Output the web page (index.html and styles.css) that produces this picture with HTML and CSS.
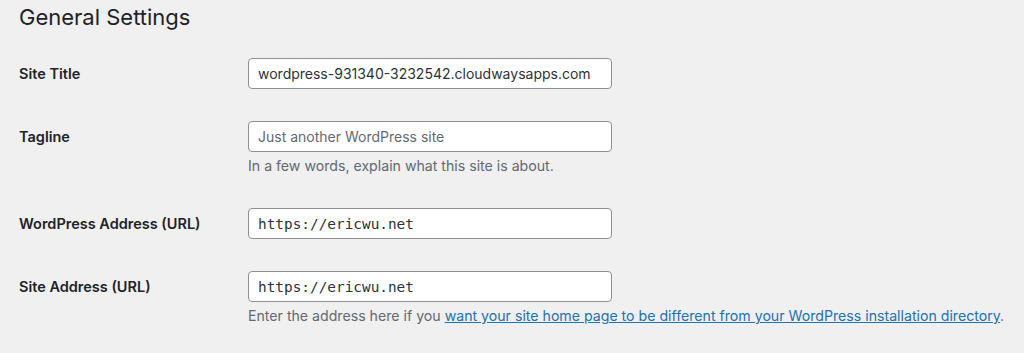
FILE: index.html
```
<!DOCTYPE html>
<html lang="en">
<head>
    <meta charset="UTF-8">
    <meta name="viewport" content="width=device-width, initial-scale=1.0">
    <title>General Settings</title>
    <link rel="stylesheet" href="styles.css">
</head>
<body>
    <div class="wrap">
        <h1>General Settings</h1>
        <div class="form-table">
            <div class="row">
                <label class="row-label" for="blogname">Site Title</label>
                <div class="row-field">
                    <input id="blogname" type="text" class="regular-text" value="wordpress-931340-3232542.cloudwaysapps.com">
                </div>
            </div>
            <div class="row">
                <label class="row-label" for="blogdescription">Tagline</label>
                <div class="row-field">
                    <input id="blogdescription" type="text" class="regular-text" placeholder="Just another WordPress site">
                    <p class="description">In a few words, explain what this site is about.</p>
                </div>
            </div>
            <div class="row">
                <label class="row-label" for="siteurl">WordPress Address (URL)</label>
                <div class="row-field">
                    <input id="siteurl" type="url" class="regular-text code" value="https://ericwu.net">
                </div>
            </div>
            <div class="row">
                <label class="row-label" for="home">Site Address (URL)</label>
                <div class="row-field">
                    <input id="home" type="url" class="regular-text code" value="https://ericwu.net">
                    <p class="description">Enter the address here if you <a href="javascript:;">want your site home page to be different from your WordPress installation directory</a>.</p>
                </div>
            </div>
        </div>
    </div>
</body>
</html>
```
FILE: styles.css
```
* {
    margin: 0;
    padding: 0;
    box-sizing: border-box;
}
body {
    background-color: #f0f0f1;
    color: #1d2327;
    font-family: Inter, "Liberation Sans", Arial, sans-serif;
    font-size: 14px;
}
.wrap {
    padding: 0 19px;
}
h1 {
    font-size: 22px;
    font-weight: 400;
    line-height: 30px;
    padding-top: 2px;
    height: 42px;
}
.row {
    display: flex;
    align-items: flex-start;
    padding: 16px 0;
}
.row-label {
    width: 229px;
    flex-shrink: 0;
    font-weight: 600;
    font-size: 14.5px;
    line-height: 31px;
}
.row-field {
    flex: 1;
}
.regular-text {
    display: block;
    width: 364px;
    height: 31px;
    padding: 0 9px;
    border: 1px solid #8c8f94;
    border-radius: 4px;
    background-color: #ffffff;
    color: #2c3338;
    font-family: Inter, "Liberation Sans", Arial, sans-serif;
    font-size: 14px;
}
.regular-text::placeholder {
    color: #646970;
}
.code {
    font-family: "DejaVu Sans Mono", monospace;
    font-size: 14.4px;
}
.description {
    margin-top: 4px;
    color: #646970;
    font-size: 14.15px;
    line-height: 20px;
}
.description a {
    color: #2271b1;
}
```
